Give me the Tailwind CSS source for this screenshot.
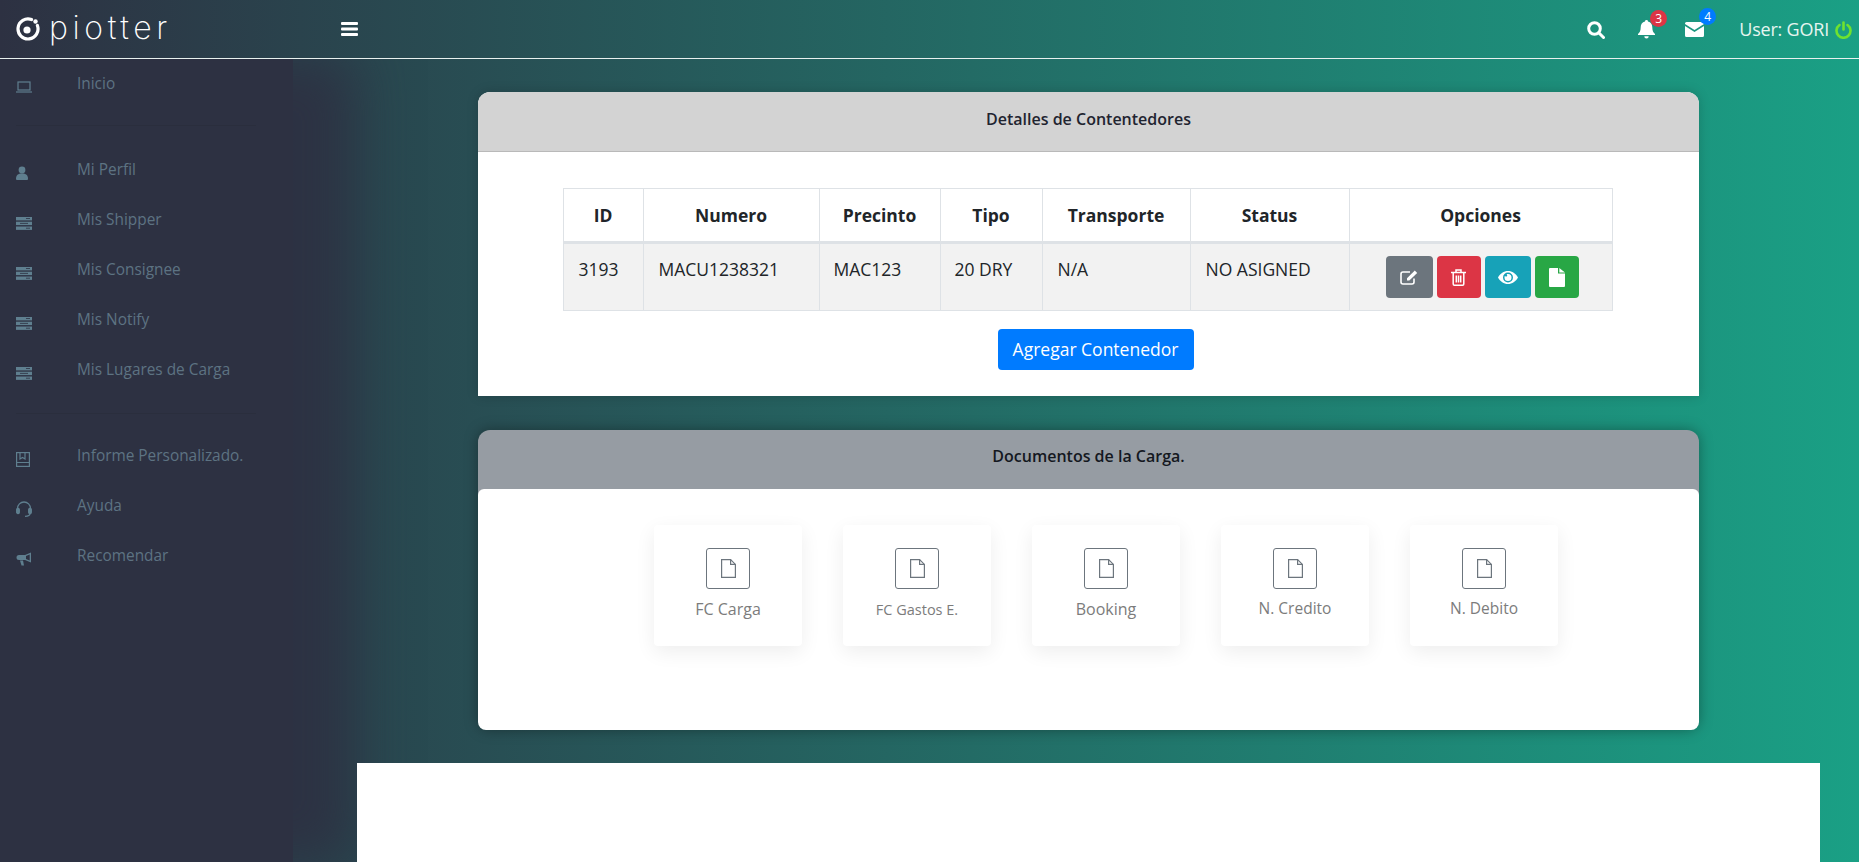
<!DOCTYPE html>
<html lang="es">
<head>
    <meta charset="UTF-8">
    <title>Piotter - Detalles de Contentedores</title>
    <script src="https://cdn.jsdelivr.net/npm/@tailwindcss/browser@4"></script>
</head>
<body class="h-[862px] overflow-hidden font-['Open_Sans',sans-serif] text-[#212529] bg-[linear-gradient(90deg,#2d3142_0%,#1aa085_100%)]">
    <header class="h-[59px] border-b border-[#e8f0ee] flex items-center text-white">
        <div class="w-[341px] flex items-center pl-[15px] gap-[9px]">
            <svg class="w-[25px] h-[25px]" viewBox="0 0 25 25" fill="none">
                <path d="M16.500 2.600A10 10 0 1 0 22.400 8.500" stroke="#fff" stroke-width="3.200" stroke-linecap="round"/>
                <circle cx="12" cy="13" r="3.600" fill="#fff"/>
                <circle cx="20.500" cy="4.500" r="2.200" fill="#fff"/>
            </svg>
            <span class="font-['Inter',sans-serif] font-extralight text-[32px] leading-none tracking-[4.600px] -mt-[3px]">piotter</span>
        </div>
        <svg class="w-[17px] h-[14px]" viewBox="0 0 17 14" fill="#fff">
            <rect width="17" height="3" rx="1"/><rect y="5.500" width="17" height="3" rx="1"/><rect y="11" width="17" height="3" rx="1"/>
        </svg>
        <div class="ml-auto flex items-center pr-[7px] pt-[1px]">
            <svg class="w-[18px] h-[18px] mr-[32px]" viewBox="0 0 18 18" fill="none" stroke="#fff" stroke-width="3">
                <circle cx="7.500" cy="7.500" r="5.800"/><path d="M12 12l4.500 4.500" stroke-linecap="round"/>
            </svg>
            <div class="relative mr-[29px]">
                <svg class="w-[19px] h-[19px] block" viewBox="0 0 19 19" fill="#fff">
                    <path d="M9.500 0a1.500 1.500 0 0 1 1.500 1.600c2.800.6 4.300 2.800 4.300 5.600 0 3.600 1 5.200 2.700 6.800v1H1v-1c1.700-1.600 2.700-3.200 2.700-6.800 0-2.800 1.500-5 4.300-5.600A1.500 1.500 0 0 1 9.500 0zM7.300 16.200h4.400a2.200 2.200 0 0 1-4.400 0z"/>
                </svg>
                <span class="absolute -top-[10px] left-[13px] w-[17px] h-[17px] rounded-full bg-[#dc3545] text-[12px] leading-[17px] text-center">3</span>
            </div>
            <div class="relative mr-[35px]">
                <svg class="w-[19px] h-[15px] block" viewBox="0 0 19 15" fill="#fff">
                    <path d="M0 1.500A1.500 1.500 0 0 1 1.500 0h16A1.500 1.500 0 0 1 19 1.500v.6L9.500 8 0 2.100zM0 4l9.500 5.900L19 4v9.500a1.500 1.500 0 0 1-1.500 1.500h-16A1.500 1.500 0 0 1 0 13.500z"/>
                </svg>
                <span class="absolute -top-[14px] left-[14px] w-[17px] h-[17px] rounded-full bg-[#007bff] text-[12px] leading-[17px] text-center">4</span>
            </div>
            <span class="text-[18px] tracking-[-0.2px] text-[#e6f5f0]">User: GORI</span>
            <svg class="w-[17px] h-[18px] ml-[6px]" viewBox="0 0 17 18" fill="none" stroke="#6fe22f" stroke-width="2.600" stroke-linecap="round">
                <path d="M8.500 1.500v7"/><path d="M4.500 4a7 7 0 1 0 8 0"/>
            </svg>
        </div>
    </header>

    <div class="flex h-[803px] overflow-hidden">
        <aside class="relative w-[293px] h-[803px] shrink-0 bg-[#2d3142] shadow-[60px_0_50px_rgba(45,49,66,0.9)] text-[15.400px] text-[#5d7382] pl-[16px] pt-[2px]">
            <ul>
                <li class="flex h-[46px] items-center">
                    <svg class="w-[16px] h-[12px] mt-[6px] mr-[45px]" viewBox="0 0 16 12" fill="none" stroke="#5f7f8f" stroke-width="1.200"><rect x="2" y="1" width="12" height="8"/><path d="M0 11h16"/></svg>
                    Inicio
                </li>
            </ul>
            <div class="w-[240px] h-px bg-[#2a2e3d] mt-[18px] mb-[19px]"></div>
            <ul>
                <li class="flex h-[50px] items-center">
                    <svg class="w-[12px] h-[14px] mt-[6px] mr-[49px]" viewBox="0 0 12 14" fill="#5f7f8f"><circle cx="6" cy="4" r="3.400"/><path d="M0 13c0-4 2-5.500 6-5.500S12 9 12 13a1 1 0 0 1-1 1H1a1 1 0 0 1-1-1z"/></svg>
                    Mi Perfil
                </li>
                <li class="flex h-[50px] items-center">
                    <svg class="w-[16px] h-[13px] mt-[6px] mr-[45px]" viewBox="0 0 16 13" fill="#5f7f8f"><rect width="16" height="3.400"/><rect y="4.700" width="16" height="3.400"/><rect y="9.500" width="16" height="3.400"/><path d="M10 1.500h4M4 6.400h8M10 11.200h4" stroke="#2d3142" stroke-width=".8"/></svg>
                    Mis Shipper
                </li>
                <li class="flex h-[50px] items-center">
                    <svg class="w-[16px] h-[13px] mt-[6px] mr-[45px]" viewBox="0 0 16 13" fill="#5f7f8f"><rect width="16" height="3.400"/><rect y="4.700" width="16" height="3.400"/><rect y="9.500" width="16" height="3.400"/><path d="M10 1.500h4M4 6.400h8M10 11.200h4" stroke="#2d3142" stroke-width=".8"/></svg>
                    Mis Consignee
                </li>
                <li class="flex h-[50px] items-center">
                    <svg class="w-[16px] h-[13px] mt-[6px] mr-[45px]" viewBox="0 0 16 13" fill="#5f7f8f"><rect width="16" height="3.400"/><rect y="4.700" width="16" height="3.400"/><rect y="9.500" width="16" height="3.400"/><path d="M10 1.500h4M4 6.400h8M10 11.200h4" stroke="#2d3142" stroke-width=".8"/></svg>
                    Mis Notify
                </li>
                <li class="flex h-[50px] items-center">
                    <svg class="w-[16px] h-[13px] mt-[6px] mr-[45px]" viewBox="0 0 16 13" fill="#5f7f8f"><rect width="16" height="3.400"/><rect y="4.700" width="16" height="3.400"/><rect y="9.500" width="16" height="3.400"/><path d="M10 1.500h4M4 6.400h8M10 11.200h4" stroke="#2d3142" stroke-width=".8"/></svg>
                    Mis Lugares de Carga
                </li>
            </ul>
            <div class="w-[240px] h-px bg-[#2a2e3d] mt-[18px] mb-[17px]"></div>
            <ul>
                <li class="flex h-[50px] items-center">
                    <svg class="w-[14px] h-[15px] mt-[6px] mr-[47px]" viewBox="0 0 14 15" fill="none" stroke="#5f7f8f" stroke-width="1.200"><rect x=".6" y=".6" width="12.800" height="13.800"/><path d="M4 1v6l2.500-1.500L9 7V1M.6 10.500h12.800"/></svg>
                    Informe Personalizado.
                </li>
                <li class="flex h-[50px] items-center">
                    <svg class="w-[16px] h-[16px] mt-[6px] mr-[45px]" viewBox="0 0 16 16" fill="none" stroke="#5f7f8f" stroke-width="1.300"><path d="M1.500 9V7.500a6.500 6.500 0 0 1 13 0V9"/><rect x=".7" y="7.500" width="2.600" height="5" rx="1.200" fill="#5f7f8f"/><rect x="12.700" y="7.500" width="2.600" height="5" rx="1.200" fill="#5f7f8f"/><path d="M14 12.500c0 2-2 2.800-5 2.800"/></svg>
                    Ayuda
                </li>
                <li class="flex h-[50px] items-center">
                    <svg class="w-[16px] h-[14px] mt-[6px] mr-[45px]" viewBox="0 0 16 14" fill="#5f7f8f"><path d="M15 .5v10L9 8H3a2.500 2.500 0 0 1 0-5h6z"/><path d="M4 8.500h3l1 5H5.500z"/><path d="M13.700 2.500 10 4v3l3.700 1.500z" fill="#2d3142"/></svg>
                    Recomendar
                </li>
            </ul>
        </aside>

        <main class="relative flex-1 h-[803px] overflow-hidden pl-[64px] pr-[39px] pt-[33px]">
            <div class="mx-[121px] flex flex-col gap-[34px]">
                <section class="bg-white rounded-t-[12px] h-[304px] shadow-[0_0_12px_rgba(0,0,0,0.18)]">
                    <h2 class="h-[60px] pb-[5px] rounded-t-[12px] bg-[#d3d3d3] border-b border-[#b9b9b9] flex items-center justify-center text-[16px] font-semibold text-[#1f2430]">Detalles de Contentedores</h2>
                    <div class="pt-[36px] flex flex-col items-center">
                        <table class="w-[1049px] mr-[2px] table-fixed border-collapse text-[17.500px]">
                            <colgroup>
                                <col class="w-[80px]"><col class="w-[176px]"><col class="w-[121px]"><col class="w-[102px]"><col class="w-[148px]"><col class="w-[159px]"><col class="w-[263px]">
                            </colgroup>
                            <thead>
                                <tr class="h-[54px] text-[17.500px] font-bold">
                                    <th class="border border-[#dee2e6] border-b-[3px]">ID</th>
                                    <th class="border border-[#dee2e6] border-b-[3px]">Numero</th>
                                    <th class="border border-[#dee2e6] border-b-[3px]">Precinto</th>
                                    <th class="border border-[#dee2e6] border-b-[3px]">Tipo</th>
                                    <th class="border border-[#dee2e6] border-b-[3px]">Transporte</th>
                                    <th class="border border-[#dee2e6] border-b-[3px]">Status</th>
                                    <th class="border border-[#dee2e6] border-b-[3px]">Opciones</th>
                                </tr>
                            </thead>
                            <tbody>
                                <tr class="h-[68px] bg-[#f2f2f2] align-top">
                                    <td class="border border-[#dee2e6] px-[15px] pt-[12px]">3193</td>
                                    <td class="border border-[#dee2e6] px-[15px] pt-[12px]">MACU1238321</td>
                                    <td class="border border-[#dee2e6] px-[14px] pt-[12px]">MAC123</td>
                                    <td class="border border-[#dee2e6] px-[14px] pt-[12px]">20 DRY</td>
                                    <td class="border border-[#dee2e6] px-[15px] pt-[12px]">N/A</td>
                                    <td class="border border-[#dee2e6] px-[15px] pt-[12px]">NO ASIGNED</td>
                                    <td class="border border-[#dee2e6] pt-[12px]">
                                        <div class="flex justify-start gap-[4px] pl-[36px]">
                                            <button class="w-[47px] h-[42px] rounded-[4px] bg-[#6c757d] flex items-center justify-center">
                                                <svg class="w-[19px] h-[16px]" viewBox="0 0 19 16" fill="none" stroke="#fff" stroke-width="1.600"><path d="M14 9.500V13a2 2 0 0 1-2 2H3a2 2 0 0 1-2-2V5a2 2 0 0 1 2-2h7"/><path d="M7 11.500V9.300L14.800 1.500 17.200 3.900 9.300 11.500z" fill="#fff" stroke="none"/></svg>
                                            </button>
                                            <button class="w-[44px] h-[42px] rounded-[4px] bg-[#dc3545] flex items-center justify-center">
                                                <svg class="w-[15px] h-[17px]" viewBox="0 0 15 17" fill="none" stroke="#fff" stroke-width="1.500"><path d="M0 3.500h15"/><path d="M5 3V1h5v2"/><path d="M2.200 3.500V15a1.200 1.200 0 0 0 1.200 1.200h8.200a1.200 1.200 0 0 0 1.200-1.200V3.500"/><path d="M5.300 6.500v7M7.500 6.500v7M9.700 6.500v7"/></svg>
                                            </button>
                                            <button class="w-[46px] h-[42px] rounded-[4px] bg-[#17a2b8] flex items-center justify-center">
                                                <svg class="w-[20px] h-[13px]" viewBox="0 0 20 13" fill="#fff"><path d="M0 6.500C2.300 2.500 5.800 0 10 0s7.700 2.500 10 6.500C17.700 10.500 14.200 13 10 13S2.300 10.500 0 6.500zm10-5a5 5 0 1 0 0 10 5 5 0 0 0 0-10z" fill-rule="evenodd"/><path d="M10 3a3.500 3.500 0 1 1-3.500 3.500c0-.5.1-1 .3-1.400.4.7 2 .6 2.300-.2.3-.7-.1-1.400-.6-1.700.5-.1 1-.2 1.500-.2z"/></svg>
                                            </button>
                                            <button class="w-[44px] h-[42px] rounded-[4px] bg-[#28a745] flex items-center justify-center">
                                                <svg class="w-[16px] h-[19px]" viewBox="0 0 16 19" fill="#fff"><path d="M0 1a1 1 0 0 1 1-1h8v5.500h7V18a1 1 0 0 1-1 1H1a1 1 0 0 1-1-1z"/><path d="M10.300 0 16 4.500h-5.700z"/></svg>
                                            </button>
                                        </div>
                                    </td>
                                </tr>
                            </tbody>
                        </table>
                        <button class="mt-[18px] ml-[14px] w-[196px] h-[41px] rounded-[4px] bg-[#007bff] text-white text-[17.500px]">Agregar Contenedor</button>
                    </div>
                </section>

                <section class="h-[300px] rounded-[12px] bg-[#969ca3] shadow-[0_0_14px_rgba(0,0,0,0.35)]">
                    <h2 class="h-[59px] pb-[7px] flex items-center justify-center text-[16px] font-semibold text-[#14181f]">Documentos de la Carga.</h2>
                    <div class="h-[241px] bg-white rounded-[8px] rounded-t-[6px] pt-[36px] pl-[176px] flex gap-[41px]">
                        <div class="w-[148px] h-[121px] rounded-[4px] bg-white shadow-[0_6px_20px_rgba(0,0,0,0.07)] flex flex-col items-center pt-[23px] text-[16px] text-[#7c7c7c]">
                            <span class="w-[44px] h-[41px] rounded-[3px] border border-[#6c757d] flex items-center justify-center">
                                <svg class="w-[15px] h-[19px]" viewBox="0 0 15 19" fill="none" stroke="#6c757d" stroke-width="1.200"><path d="M.6 18.400V.6h9l4.800 4.800v13z"/><path d="M9.600.6v4.800h4.800"/></svg>
                            </span>
                            <span class="mt-[8px]">FC Carga</span>
                        </div>
                        <div class="w-[148px] h-[121px] rounded-[4px] bg-white shadow-[0_6px_20px_rgba(0,0,0,0.07)] flex flex-col items-center pt-[23px] text-[14.500px] text-[#7c7c7c]">
                            <span class="w-[44px] h-[41px] rounded-[3px] border border-[#6c757d] flex items-center justify-center">
                                <svg class="w-[15px] h-[19px]" viewBox="0 0 15 19" fill="none" stroke="#6c757d" stroke-width="1.200"><path d="M.6 18.400V.6h9l4.800 4.800v13z"/><path d="M9.600.6v4.800h4.800"/></svg>
                            </span>
                            <span class="mt-[10px]">FC Gastos E.</span>
                        </div>
                        <div class="w-[148px] h-[121px] rounded-[4px] bg-white shadow-[0_6px_20px_rgba(0,0,0,0.07)] flex flex-col items-center pt-[23px] text-[16px] text-[#7c7c7c]">
                            <span class="w-[44px] h-[41px] rounded-[3px] border border-[#6c757d] flex items-center justify-center">
                                <svg class="w-[15px] h-[19px]" viewBox="0 0 15 19" fill="none" stroke="#6c757d" stroke-width="1.200"><path d="M.6 18.400V.6h9l4.800 4.800v13z"/><path d="M9.600.6v4.800h4.800"/></svg>
                            </span>
                            <span class="mt-[8px]">Booking</span>
                        </div>
                        <div class="w-[148px] h-[121px] rounded-[4px] bg-white shadow-[0_6px_20px_rgba(0,0,0,0.07)] flex flex-col items-center pt-[23px] text-[15.500px] text-[#7c7c7c]">
                            <span class="w-[44px] h-[41px] rounded-[3px] border border-[#6c757d] flex items-center justify-center">
                                <svg class="w-[15px] h-[19px]" viewBox="0 0 15 19" fill="none" stroke="#6c757d" stroke-width="1.200"><path d="M.6 18.400V.6h9l4.800 4.800v13z"/><path d="M9.600.6v4.800h4.800"/></svg>
                            </span>
                            <span class="mt-[8px]">N. Credito</span>
                        </div>
                        <div class="w-[148px] h-[121px] rounded-[4px] bg-white shadow-[0_6px_20px_rgba(0,0,0,0.07)] flex flex-col items-center pt-[23px] text-[15.500px] text-[#7c7c7c]">
                            <span class="w-[44px] h-[41px] rounded-[3px] border border-[#6c757d] flex items-center justify-center">
                                <svg class="w-[15px] h-[19px]" viewBox="0 0 15 19" fill="none" stroke="#6c757d" stroke-width="1.200"><path d="M.6 18.400V.6h9l4.800 4.800v13z"/><path d="M9.600.6v4.800h4.800"/></svg>
                            </span>
                            <span class="mt-[8px]">N. Debito</span>
                        </div>
                    </div>
                </section>
            </div>
            <div class="h-[100px] bg-white mt-[33px]"></div>
        </main>
    </div>
</body>
</html>
